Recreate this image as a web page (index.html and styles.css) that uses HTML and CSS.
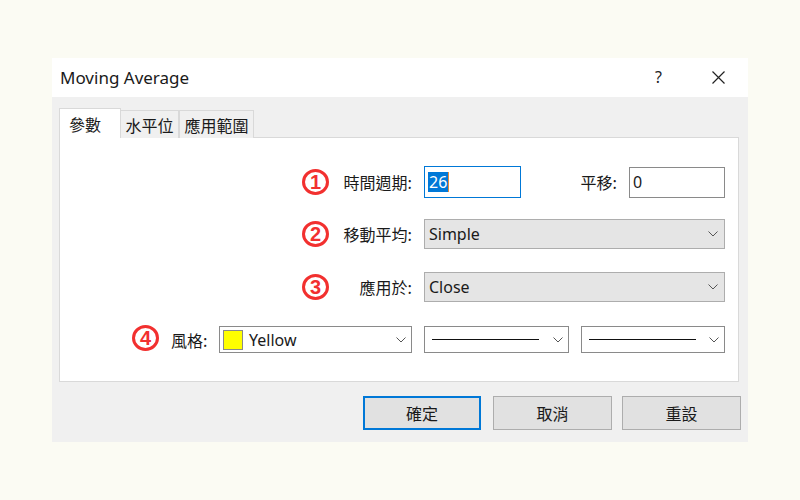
FILE: index.html
```html
<!DOCTYPE html>
<html lang="zh-Hant">
<head>
<meta charset="utf-8">
<title>Moving Average</title>
<link rel="stylesheet" href="styles.css">
</head>
<body>
<div class="dialog">
  <div class="titlebar">
    <span class="title">Moving Average</span>
    <div class="tb-btns">
      <span class="help">?</span>
      <svg class="close" width="13" height="13" viewBox="0 0 13 13"><path d="M0.5 0.5 L12.5 12.5 M12.5 0.5 L0.5 12.5" stroke="#222" stroke-width="1.2" fill="none"/></svg>
    </div>
  </div>
  <div class="body">
    <div class="tabs">
      <div class="tab active">參數</div>
      <div class="tab t2">水平位</div>
      <div class="tab t3">應用範圍</div>
    </div>
    <div class="panel">
      <div class="row r1">
        <span class="num">1</span>
        <span class="lbl">時間週期:</span>
        <div class="input focus"><span class="sel">26</span></div>
        <div class="shift">
          <span class="lbl2">平移:</span>
          <div class="input small">0</div>
        </div>
      </div>
      <div class="row r2">
        <span class="num">2</span>
        <span class="lbl">移動平均:</span>
        <div class="select wide"><span class="val">Simple</span><svg class="chev" width="10" height="6" viewBox="0 0 10 6"><path d="M0.5 0.5 L5 5 L9.5 0.5" stroke="#555" stroke-width="1" fill="none"/></svg></div>
      </div>
      <div class="row r3">
        <span class="num">3</span>
        <span class="lbl">應用於:</span>
        <div class="select wide"><span class="val">Close</span><svg class="chev" width="10" height="6" viewBox="0 0 10 6"><path d="M0.5 0.5 L5 5 L9.5 0.5" stroke="#555" stroke-width="1" fill="none"/></svg></div>
      </div>
      <div class="row r4">
        <span class="num n4">4</span>
        <span class="lbl4">風格:</span>
        <div class="combo color"><span class="swatch"></span><span class="val">Yellow</span><svg class="chev" width="10" height="6" viewBox="0 0 10 6"><path d="M0.5 0.5 L5 5 L9.5 0.5" stroke="#555" stroke-width="1" fill="none"/></svg></div>
        <div class="combo line1"><span class="line"></span><svg class="chev" width="10" height="6" viewBox="0 0 10 6"><path d="M0.5 0.5 L5 5 L9.5 0.5" stroke="#555" stroke-width="1" fill="none"/></svg></div>
        <div class="combo line2"><span class="line"></span><svg class="chev" width="10" height="6" viewBox="0 0 10 6"><path d="M0.5 0.5 L5 5 L9.5 0.5" stroke="#555" stroke-width="1" fill="none"/></svg></div>
      </div>
    </div>
    <div class="buttons">
      <button class="btn default">確定</button>
      <button class="btn cancel">取消</button>
      <button class="btn reset">重設</button>
    </div>
  </div>
</div>
</body>
</html>
```

FILE: styles.css
```css
* { box-sizing: border-box; }

html, body {
  margin: 0;
  padding: 0;
}

body {
  background: #fbfbf3;
  width: 800px;
  height: 500px;
  padding: 58px 52px 0 52px;
  font-family: "Segoe UI", "Noto Sans", "Noto Sans CJK TC", sans-serif;
  color: #1a1a1a;
}

.dialog {
  width: 696px;
  height: 384px;
  display: flex;
  flex-direction: column;
}

.titlebar {
  height: 39px;
  background: #ffffff;
  display: flex;
  align-items: center;
  padding-left: 8px;
  padding-right: 23px;
}

.title {
  font-size: 17px;
  color: #1a1a1a;
  flex: 1;
  margin-top: -1px;
}

.tb-btns {
  display: flex;
  align-items: center;
  gap: 50px;
}

.help {
  font-size: 16px;
  color: #222;
  margin-top: -1px;
}

.close {
  display: block;
}

.body {
  flex: 1;
  background: #f0f0f0;
  padding: 11px 9px 12px 7px;
  display: flex;
  flex-direction: column;
}

.tabs {
  display: flex;
  align-items: flex-end;
  height: 30px;
  margin-bottom: -1px;
  position: relative;
  z-index: 1;
}

.tab {
  height: 28px;
  border: 1px solid #d9d9d9;
  border-bottom: none;
  background: #f0f0f0;
  font-family: "Noto Sans CJK TC", sans-serif;
  font-size: 16px;
  display: flex;
  align-items: center;
  justify-content: center;
  color: #1a1a1a;
  line-height: 1;
}

.tab.active {
  width: 62px;
  height: 30px;
  background: #ffffff;
  justify-content: flex-start;
  padding-left: 9px;
}

.tab.t2 {
  width: 58px;
  border-left: none;
}

.tab.t3 {
  width: 75px;
  border-left: 1px solid #d9d9d9;
}

.panel {
  width: 680px;
  height: 245px;
  background: #ffffff;
  border: 1px solid #d9d9d9;
  padding-right: 13px;
}

.row {
  display: flex;
  align-items: center;
}

.r1 { margin-top: 28px; height: 32px; padding-left: 242px; }
.r2 { margin-top: 21px; height: 30px; padding-left: 242px; }
.r3 { margin-top: 23px; height: 30px; padding-left: 242px; }
.r4 { margin-top: 24px; height: 27px; padding-left: 72px; }

.num {
  width: 27px;
  height: 26px;
  flex: none;
  border: 3px solid #f2302f;
  border-radius: 50%;
  color: #f2302f;
  font-family: "Liberation Sans", Arial, sans-serif;
  font-weight: bold;
  font-size: 20px;
  display: flex;
  align-items: center;
  justify-content: center;
  line-height: 1;
}

.num.n4 {
  margin-top: -3px;
}

.lbl {
  width: 83px;
  text-align: right;
  margin-right: 12px;
  font-family: "Noto Sans CJK TC", sans-serif;
  font-size: 16px;
  color: #1a1a1a;
  white-space: nowrap;
}

.lbl2 {
  font-family: "Noto Sans CJK TC", sans-serif;
  font-size: 16px;
  margin-right: 12px;
  white-space: nowrap;
}

.lbl4 {
  width: 36px;
  margin-left: 12px;
  margin-right: 12px;
  font-family: "Noto Sans CJK TC", sans-serif;
  font-size: 16px;
  white-space: nowrap;
}

.input {
  width: 97px;
  height: 32px;
  border: 1px solid #8a8a8a;
  background: #fff;
  font-size: 16px;
  display: flex;
  align-items: center;
  padding-left: 3px;
  color: #1a1a1a;
}

.input.focus {
  border-color: #0078d7;
}

.input.small {
  width: 96px;
  height: 31px;
}

.sel {
  background: #0078d7;
  color: #ffffff;
  height: 20px;
  line-height: 20px;
  padding: 0 1px;
  border-right: 1px solid #e58a3a;
}

.shift {
  margin-left: auto;
  display: flex;
  align-items: center;
}

.select {
  height: 30px;
  border: 1px solid #adadad;
  background: #e5e5e5;
  display: flex;
  align-items: center;
  padding-left: 4px;
  padding-right: 6px;
  font-size: 16px;
  color: #1a1a1a;
}

.select.wide {
  width: 301px;
}

.val {
  flex: 1;
}

.chev {
  display: block;
  flex: none;
}

.combo {
  height: 27px;
  border: 1px solid #8a8a8a;
  background: #ffffff;
  display: flex;
  align-items: center;
  padding-right: 5px;
  font-size: 16px;
  color: #1a1a1a;
}

.combo.color {
  width: 193px;
  padding-left: 3px;
}

.swatch {
  width: 20px;
  height: 20px;
  background: #ffff00;
  border: 1px solid #8a8a8a;
  margin-right: 6px;
  flex: none;
}

.combo.line1 {
  width: 145px;
  margin-left: 12px;
  padding-left: 7px;
}

.combo.line2 {
  width: 144px;
  margin-left: 12px;
  padding-left: 7px;
}

.line {
  width: 107px;
  height: 1px;
  border-top: 1.5px solid #111;
  margin-right: auto;
}

.buttons {
  margin-top: 14px;
  height: 34px;
  display: flex;
  justify-content: flex-end;
  margin-right: -2px;
}

.btn {
  height: 34px;
  background: #e1e1e1;
  border: 1px solid #adadad;
  font-family: "Noto Sans CJK TC", sans-serif;
  font-size: 16px;
  color: #1a1a1a;
  padding: 0;
  margin: 0;
}

.btn.default {
  width: 118px;
  border: 2px solid #0078d7;
}

.btn.cancel {
  width: 119px;
  margin-left: 12px;
}

.btn.reset {
  width: 119px;
  margin-left: 10px;
}
```
